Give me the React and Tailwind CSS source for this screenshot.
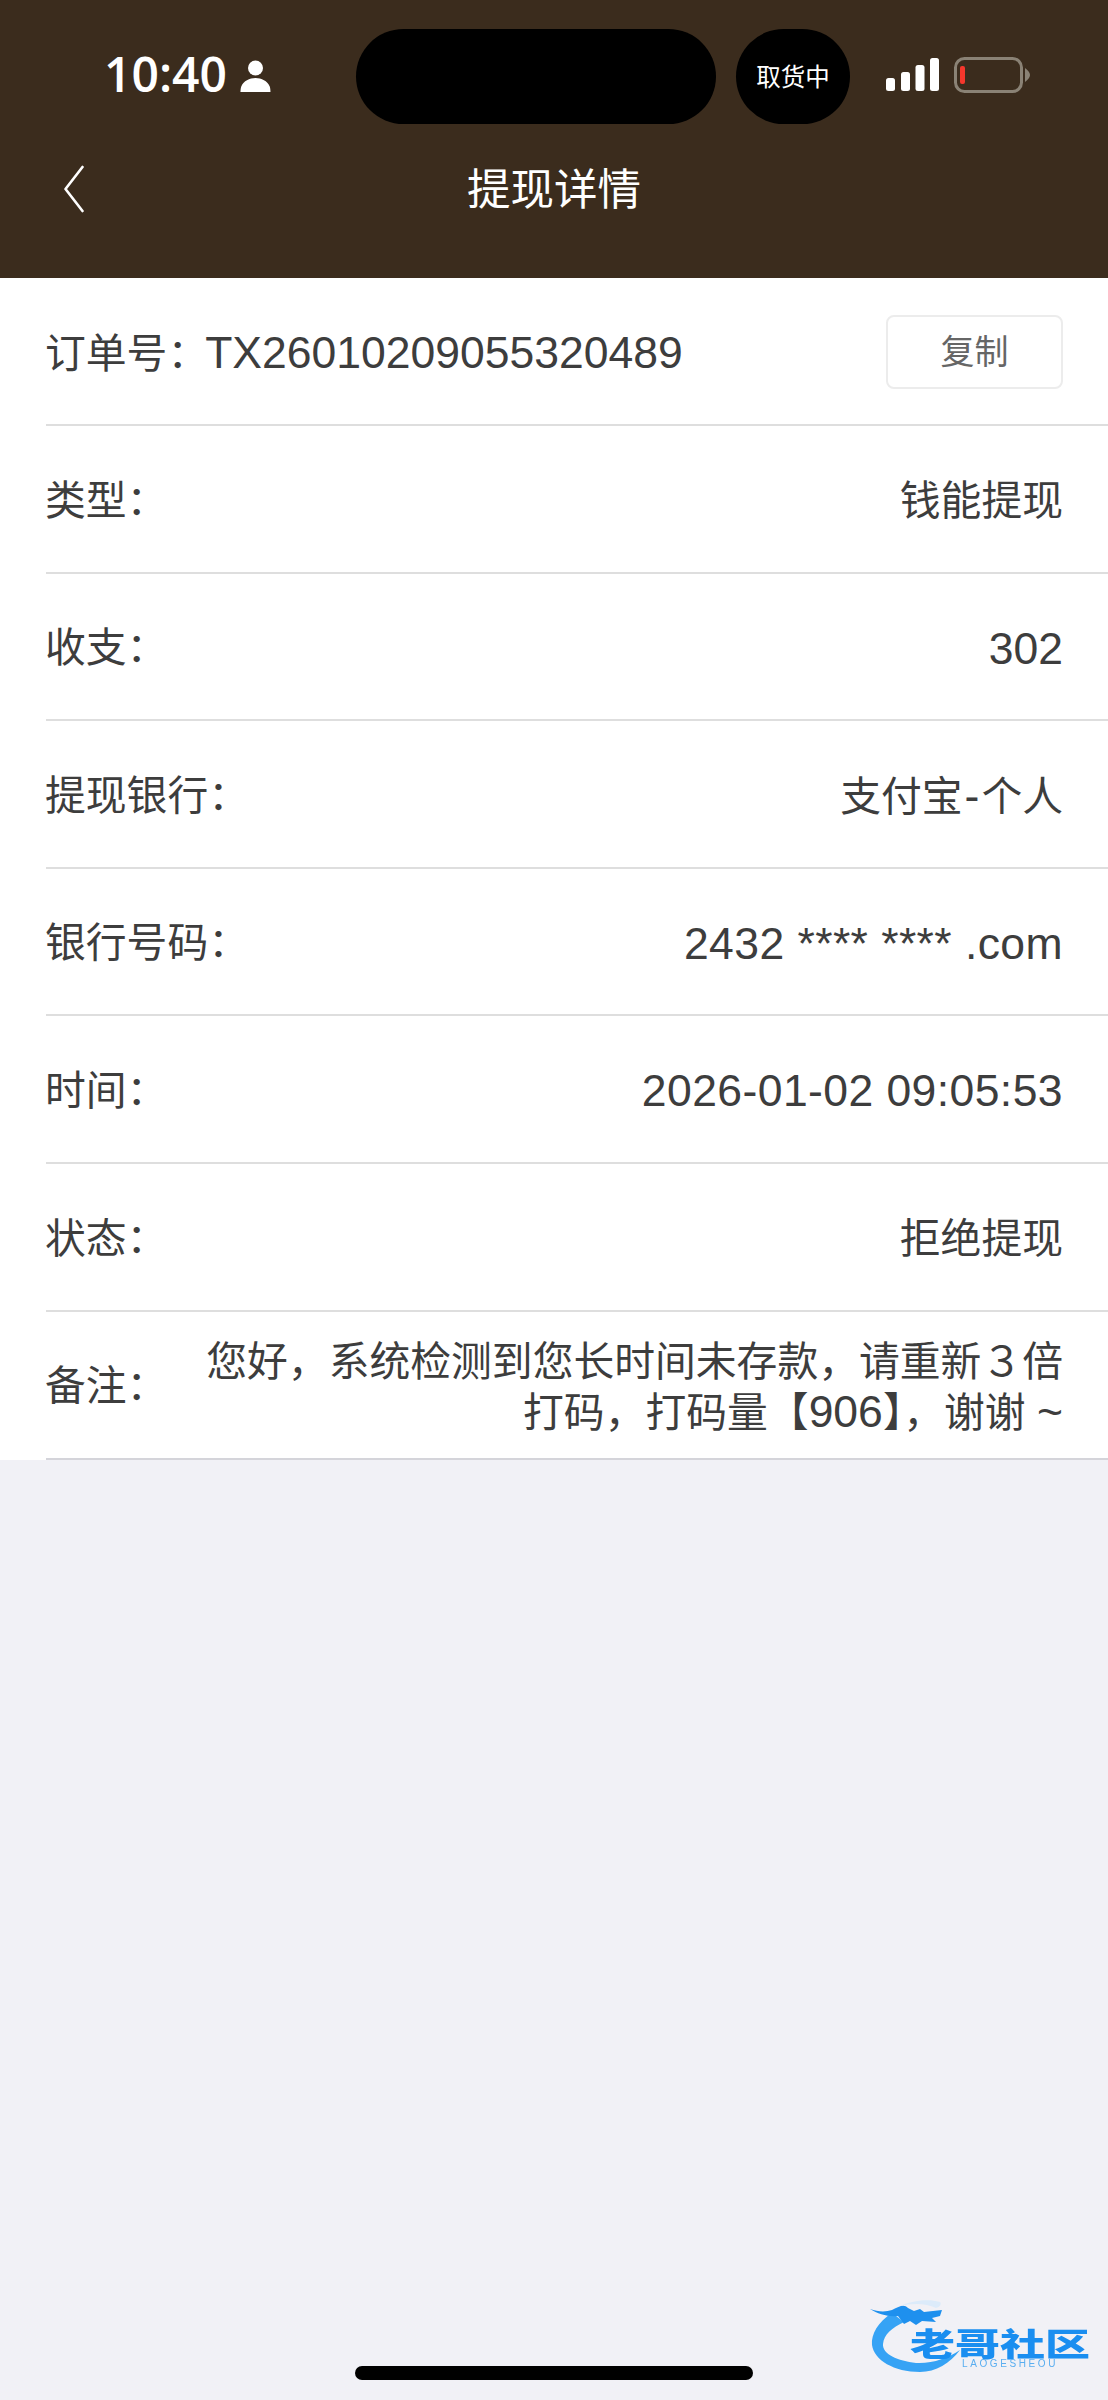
const L = ({ children }) => <span className="text-[44.5px]">{children}</span>;
const Wide = ({ children }) => <span className="text-[44.5px] tracking-[0.42px]">{children}</span>;

const rows = [
  { label: '类型：', value: '钱能提现' },
  { label: '收支：', value: <L>302</L> },
  { label: '提现银行：', value: <>支付宝<span className="text-[44.5px] mx-[2px]">-</span>个人</> },
  { label: '银行号码：', value: <Wide>2432 **** **** .com</Wide> },
  { label: '时间：', value: <Wide>2026-01-02 09:05:53</Wide> },
  { label: '状态：', value: '拒绝提现' },
];

const font = "font-['Liberation_Sans','Noto_Sans_CJK_SC',sans-serif]";

function Logo() {
  return (
    <div className="absolute right-[18px] bottom-[18px] w-[220px] h-[84px] blur-[0.6px]">
      <svg viewBox="0 0 220 84" className="absolute inset-0 w-full h-full">
        <path d="M22 15 C8 24 1 36 2 47 C4 62 24 74 50 74 C66 74 80 65 90 52 C78 60 62 66 46 65 C28 63 12 56 13 46 C14 36 22 30 34 24 Z" fill="#36a3f5" />
        <path d="M0 11 C8 14 16 14 22 12 C30 8 34 6 38 10 L44 13 L50 11 L54 14 L72 12 L70 18 L62 20 L66 24 L52 23 L46 27 L40 23 L34 26 L28 18 C18 19 8 16 0 11 Z" fill="#1e90ee" />
        <path d="M30 8 C40 3 58 0 70 4 C72 6 70 9 66 10 C56 5 42 5 30 8 Z" fill="#dcebfa" />
      </svg>
      <span className="absolute left-[40px] top-[30px] w-[180px] text-center text-[45px] leading-[30px] font-black scale-y-[0.7] text-[#1a8ef0] whitespace-nowrap font-['Noto_Sans_CJK_SC',sans-serif]">老哥社区</span>
      <span className="absolute left-[92px] top-[61px] text-[10px] leading-[10px] tracking-[2.6px] text-[#5aaef0] whitespace-nowrap font-['Liberation_Sans',sans-serif]">LAOGESHEOU</span>
    </div>
  );
}

export default function App() {
  return (
    <div className={`relative w-[1108px] h-[2400px] bg-[#f1f1f6] flex flex-col overflow-hidden ${font}`}>
      <header className="h-[278px] bg-[#3b2c1d] text-white shrink-0">
        <div className="flex items-center pt-[29px] h-[124px]">
          <div className="w-[356px] pl-[104px] flex items-center gap-[13px] mb-[2px]">
            <span className="text-[48px] leading-[46px] font-semibold mb-[3px] font-['Open_Sans',sans-serif]">10:40</span>
            <svg viewBox="0 0 30 32" className="w-[31px] h-[32px]" fill="white">
              <circle cx="15" cy="8" r="7.5" />
              <path d="M0 32 C0 32 0 28 1 26 C3 21 9 18 15 18 C21 18 27 21 29 26 C30 28 30 32 30 32 Z" />
            </svg>
          </div>
          <div className="w-[360px] h-[95px] bg-black rounded-full" />
          <div className="ml-[20px] w-[114px] h-[95px] bg-black rounded-full flex items-center justify-center text-[24.5px] font-['Noto_Sans_CJK_SC',sans-serif]">
            取货中
          </div>
          <svg viewBox="0 0 53 33" className="ml-[36px] mb-[4px] w-[53px] h-[33px]" fill="white">
            <rect x="0" y="20" width="9" height="13" rx="2.5" />
            <rect x="15" y="14" width="9" height="19" rx="2.5" />
            <rect x="29.5" y="7" width="9" height="26" rx="2.5" />
            <rect x="44" y="0" width="9" height="33" rx="2.5" />
          </svg>
          <svg viewBox="0 0 76 36" className="ml-[15px] mb-[4px] w-[76px] h-[36px]">
            <rect x="1.5" y="1.5" width="66" height="33" rx="9" fill="none" stroke="#8a8275" strokeWidth="3" />
            <rect x="6" y="9" width="5" height="18" rx="2" fill="#f5372c" />
            <path d="M71 11 C74 13 76 16 76 18 C76 20 74 23 71 25 Z" fill="#8a8275" />
          </svg>
        </div>
        <div className="flex items-center justify-between px-[63px] mt-[11px] h-[108px]">
          <svg viewBox="0 0 20 48" className="w-[21px] h-[48px]" fill="none" stroke="white" strokeWidth="2.6" strokeLinecap="round" strokeLinejoin="round">
            <path d="M19 2 L2 24 L19 46" />
          </svg>
          <h1 className="text-[43.5px] leading-[60px] mb-[5px] font-normal font-['Noto_Sans_CJK_SC',sans-serif]">提现详情</h1>
          <div className="w-[21px]" />
        </div>
      </header>

      <main className="bg-white text-[#3d3d3d] text-[40.8px] shrink-0">
        <div className="ml-[46px] h-[148px] border-b-2 border-[#dedede] flex items-center justify-between pr-[45px]">
          <span className="pt-[5px] -ml-[1px] whitespace-nowrap">订单号：<span className="text-[44.5px] -ml-[3px]">TX26010209055320489</span></span>
          <button className="mt-[2px] w-[177px] h-[74px] border-2 border-[#ececec] rounded-[8px] text-[34px] text-[#666666] bg-white">复制</button>
        </div>
        {rows.map((r) => (
          <div key={r.label} className="ml-[46px] h-[147.6px] border-b-2 border-[#dedede] flex items-center justify-between pr-[45px]">
            <span className="pt-[5px] -ml-[1px] whitespace-nowrap">{r.label}</span>
            <span className="pt-[5px] whitespace-nowrap">{r.value}</span>
          </div>
        ))}
        <div className="ml-[46px] h-[148px] border-b-2 border-[#d4d4da] flex items-center justify-between pr-[45px]">
          <span className="pt-[5px] -ml-[1px] whitespace-nowrap">备注：</span>
          <span className="w-[870px] pt-[5px] text-right leading-[50px]">您好，系统检测到您长时间未存款，请重新３倍打码，打码量【<L>906</L>】，谢谢 <L>~</L></span>
        </div>
      </main>

      <div className="mt-auto mb-[20px] mx-auto w-[398px] h-[14px] bg-black rounded-full" />
      <Logo />
    </div>
  );
}
